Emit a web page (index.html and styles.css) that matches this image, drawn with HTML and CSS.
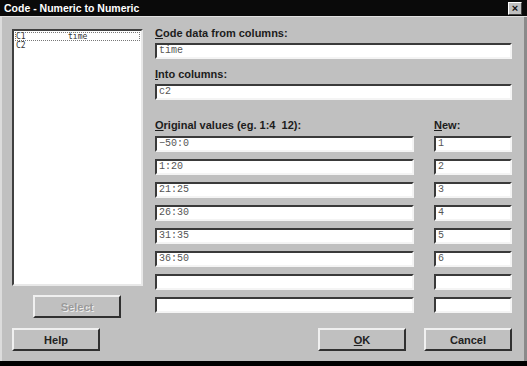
FILE: index.html
```html
<!DOCTYPE html>
<html lang="en">
<head>
    <meta charset="UTF-8">
    <title>Code - Numeric to Numeric</title>
    <link rel="stylesheet" href="styles.css">
</head>
<body>
    <div class="dialog">
        <div class="titlebar">
            <span class="title">Code - Numeric to Numeric</span>
            <span class="close">&#215;</span>
        </div>
        <div class="main">
            <div class="left">
                <div class="listbox">
                    <div class="item focus"><span class="col">C1</span><span>time</span></div>
                    <div class="item"><span class="col">C2</span></div>
                </div>
                <button class="btn select" disabled>Select</button>
            </div>
            <div class="right">
                <div class="label"><u>C</u>ode data from columns:</div>
                <div class="field">time</div>
                <div class="label"><u>I</u>nto columns:</div>
                <div class="field">c2</div>
                <div class="values">
                    <div class="label gap"><u>O</u>riginal values (eg. 1:4&nbsp; 12):</div>
                    <div class="label gap"><u>N</u>ew:</div>
                    <div class="field">&minus;50:0</div><div class="field">1</div>
                    <div class="field">1:20</div><div class="field">2</div>
                    <div class="field">21:25</div><div class="field">3</div>
                    <div class="field">26:30</div><div class="field">4</div>
                    <div class="field">31:35</div><div class="field">5</div>
                    <div class="field">36:50</div><div class="field">6</div>
                    <div class="field"></div><div class="field"></div>
                    <div class="field"></div><div class="field"></div>
                </div>
            </div>
        </div>
        <div class="footer">
            <button class="btn">Help</button>
            <span class="spacer"></span>
            <button class="btn"><u>O</u>K</button>
            <button class="btn">Cancel</button>
        </div>
    </div>
</body>
</html>
```

FILE: styles.css
```css
body {
    margin: 0;
    background-color: #000;
    width: 527px;
    height: 366px;
    overflow: hidden;
}
.dialog {
    box-sizing: border-box;
    width: 527px;
    height: 361px;
    background-color: #c0c0c0;
    border-left: 2px solid #dcdcdc;
    border-right: 3px solid #8a8a8a;
    display: flex;
    flex-direction: column;
    font-family: "Liberation Sans", Arial, sans-serif;
}
.titlebar {
    height: 16px;
    background-color: #0a0a0a;
    display: flex;
    align-items: center;
    margin-left: -2px;
    margin-right: -3px;
    padding: 0 5px 0 4px;
    border-bottom: 1px solid #e0e0e0;
}
.title {
    color: #fff;
    font-weight: bold;
    font-size: 10.5px;
    flex: 1;
}
.close {
    width: 12px;
    height: 11px;
    background-color: #c0c0c0;
    border: 1px solid;
    border-color: #fff #404040 #404040 #fff;
    font-size: 11px;
    line-height: 10px;
    text-align: center;
    font-weight: bold;
    color: #111;
}
.main {
    display: flex;
    gap: 12px;
    padding: 12px 0 0 10px;
}
.left {
    width: 131px;
    display: flex;
    flex-direction: column;
}
.listbox {
    box-sizing: border-box;
    height: 257px;
    background-color: #fff;
    border: 2px solid;
    border-color: #404040 #e8e8e8 #e8e8e8 #404040;
    padding: 1px;
    font-family: "DejaVu Sans Mono", monospace;
    font-size: 8px;
    color: #333;
}
.item {
    height: 9px;
    line-height: 9px;
    display: flex;
    padding-left: 1px;
}
.item.focus {
    outline: 1px dotted #777;
    outline-offset: -1px;
}
.col {
    width: 52px;
}
.btn {
    box-sizing: border-box;
    width: 88px;
    height: 23px;
    background-color: #c0c0c0;
    border: 2px solid;
    border-color: #f0f0f0 #303030 #303030 #f0f0f0;
    font-family: "Liberation Sans", Arial, sans-serif;
    font-weight: bold;
    font-size: 11px;
    color: #222;
    padding: 0;
}
.select {
    margin: 9px 0 0 21px;
    color: #9a9a9a;
    text-shadow: 1px 1px #eee;
}
.right {
    width: 357px;
    display: flex;
    flex-direction: column;
    margin-top: -2px;
}
.label {
    font-size: 11px;
    font-weight: bold;
    line-height: 13px;
    color: #1c1c1c;
    margin-bottom: 3px;
}
.field {
    box-sizing: border-box;
    height: 16px;
    background-color: #fff;
    border: 2px solid;
    border-color: #3a3a3a #f4f4f4 #f4f4f4 #3a3a3a;
    font-family: "Liberation Mono", monospace;
    font-size: 10px;
    line-height: 12px;
    padding-left: 2px;
    color: #555;
    margin-bottom: 9px;
}
.values {
    display: grid;
    grid-template-columns: 259px 78px;
    column-gap: 20px;
    row-gap: 7px;
    margin-top: 10px;
}
.values .field {
    margin-bottom: 0;
}
.values .label.gap {
    margin-bottom: -3px;
}
.footer {
    display: flex;
    gap: 18px;
    padding: 0 12px 0 10px;
    margin-top: 10px;
}
.spacer {
    flex: 1;
}
```
